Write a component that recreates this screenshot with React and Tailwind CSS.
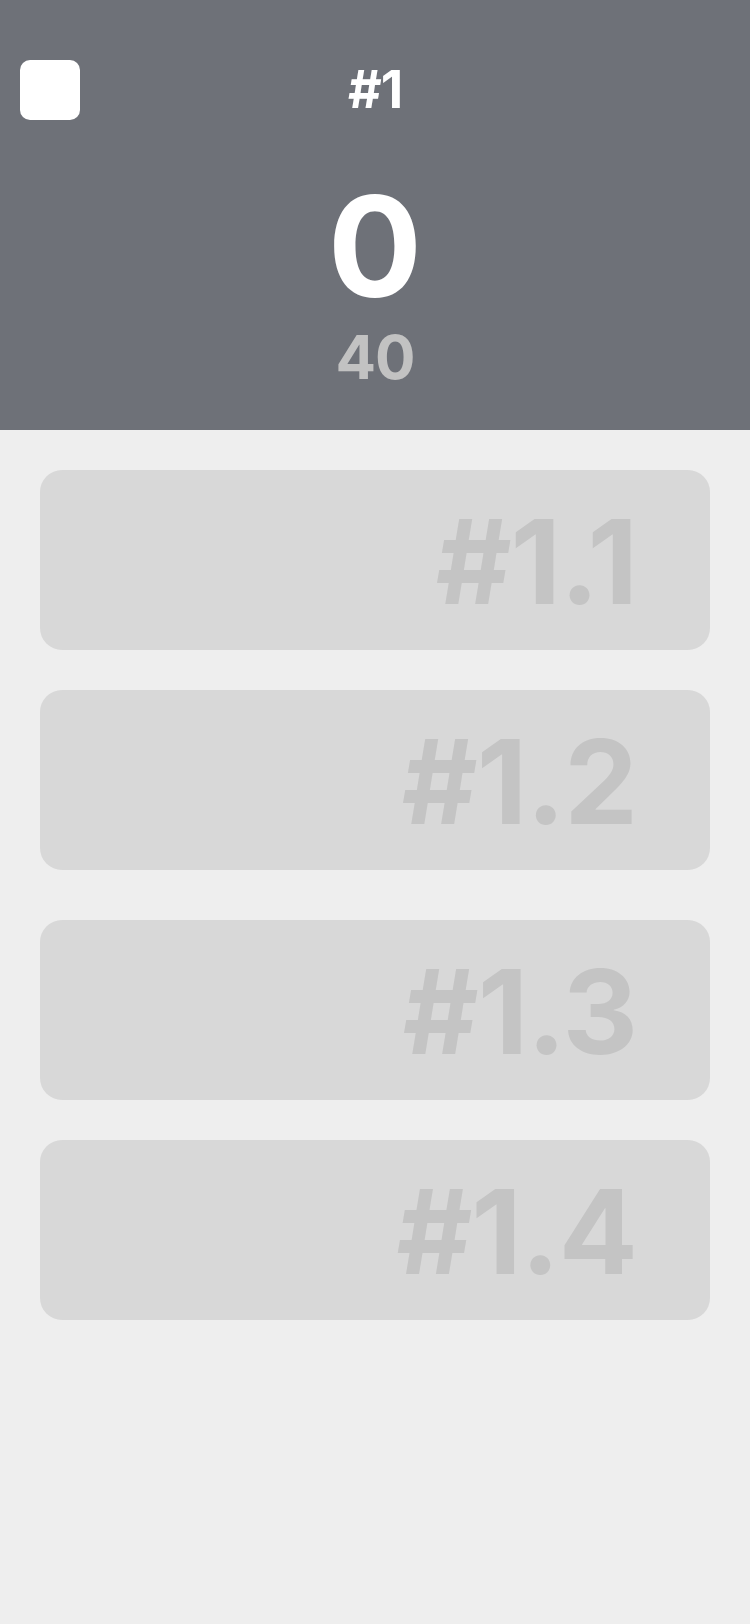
import { useState } from 'react'

const SUBS = [
  { id: '1.1', gap: 'mt-[40px]' },
  { id: '1.2', gap: 'mt-[40px]' },
  { id: '1.3', gap: 'mt-[50px]' },
  { id: '1.4', gap: 'mt-[40px]' },
]

export default function App() {
  const [count] = useState(0)
  const total = 40

  return (
    <div className="min-h-screen bg-[#eeeeee] font-['Inter','Liberation_Sans',Arial,sans-serif]">
      {/* Header */}
      <header className="h-[430px] bg-[#6e7178] pt-[60px] flex flex-col items-center">
        <div className="w-full px-[20px] grid grid-cols-[60px_1fr_60px] items-center h-[60px]">
          <button className="w-[60px] h-[60px] bg-white rounded-[10px]" />
          <h1 className="text-center text-white font-bold text-[52px] leading-none tracking-[-1px]">#1</h1>
          <span />
        </div>
        <div className="mt-[56px] text-white font-bold text-[140px] leading-none">{count}</div>
        <div className="mt-[11px] text-[#c2c2c2] font-bold text-[60px] leading-none tracking-[-1px]">{total}</div>
      </header>

      {/* Sub items */}
      <main className="px-[40px] pb-[40px]">
        {SUBS.map(s => (
          <div
            key={s.id}
            className={`${s.gap} h-[180px] rounded-[22px] bg-[#d8d8d8] flex items-center justify-end pr-[73px] pt-[3px]`}
          >
            <span className="text-[#c4c4c4] font-bold text-[117px] leading-none tracking-[-1px]">#{s.id}</span>
          </div>
        ))}
      </main>
    </div>
  )
}
